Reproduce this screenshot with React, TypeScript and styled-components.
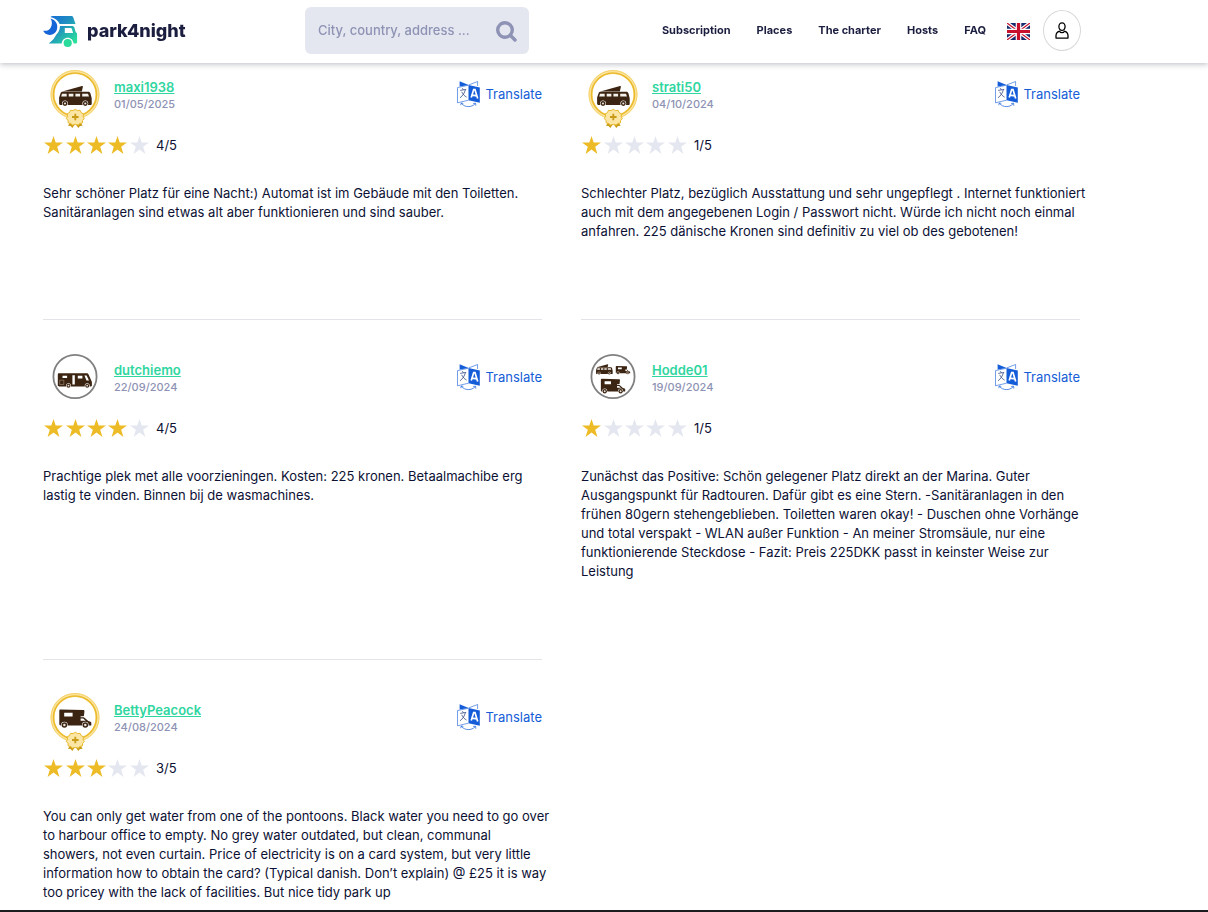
import React from "react";
import styled, { createGlobalStyle } from "styled-components";

const GlobalStyle = createGlobalStyle`
  *, *::before, *::after { box-sizing: border-box; }
  body {
    margin: 0;
    background: #fff;
    color: #0c1134;
    font-family: Inter, "Liberation Sans", sans-serif;
    font-size: 13px;
    line-height: 19px;
  }
  svg { display: block; flex: none; }
`;

const Header = styled.header`
  position: fixed;
  top: 0;
  left: 0;
  right: 0;
  z-index: 10;
  display: flex;
  align-items: center;
  height: 63px;
  padding: 0 127px 2px 43px;
  background: #fff;
  box-shadow: 0 1px 6px rgba(20, 22, 50, 0.3);
`;

const Logo = styled.a`
  display: flex;
  align-items: center;
  gap: 9px;
  width: 262px;
  color: #1b1e3f;
  font-size: 18px;
  font-weight: 800;
  line-height: 24px;
  text-decoration: none;
`;

const SearchForm = styled.form`
  display: flex;
  align-items: center;
  width: 224px;
  height: 47px;
  padding: 0 11px 0 13px;
  border-radius: 6px;
  background: #e4e7ef;
`;

const SearchInput = styled.input`
  flex: 1;
  min-width: 0;
  padding: 0;
  border: 0;
  outline: 0;
  background: transparent;
  color: #1b1e3f;
  font: 500 13px/19px Inter, "Liberation Sans", sans-serif;
  &::placeholder { color: #8e92b4; opacity: 1; }
`;

const IconButton = styled.button`
  padding: 0;
  border: 0;
  background: none;
  color: #8e92b4;
  cursor: pointer;
`;

const Nav = styled.nav`
  display: flex;
  align-items: center;
  gap: 26px;
  margin-left: auto;
`;

const NavLink = styled.a`
  color: #1b1e3f;
  font-size: 11px;
  font-weight: 700;
  white-space: nowrap;
  text-decoration: none;
`;

const LanguageButton = styled(IconButton)`
  margin: 2px 13px 0 21px;
`;

const AccountButton = styled.button`
  display: flex;
  align-items: center;
  justify-content: center;
  width: 38px;
  height: 41px;
  padding: 0;
  border: 1px solid #d8d8d8;
  border-radius: 50%;
  background: #fff;
  color: #000;
  cursor: pointer;
`;

const ReviewList = styled.main`
  display: grid;
  grid-template-columns: 1fr 1fr;
  column-gap: 39px;
  padding: 37px 128px 8px 43px;
`;

const Review = styled.article<{ $divided: boolean; $last: boolean }>`
  padding: 33px 0 ${(p) => (p.$last ? 0 : 78)}px;
  border-bottom: ${(p) => (p.$last ? 0 : 1)}px solid ${(p) => (p.$divided ? "#e4e4e8" : "transparent")};
`;

const ReviewHead = styled.div`
  display: flex;
  align-items: flex-start;
  height: 65px;
  padding-left: 7px;
`;

const Author = styled.div`
  display: flex;
  flex-direction: column;
  align-items: flex-start;
  margin-left: 14px;
  padding-top: 8px;
`;

const AuthorName = styled.a`
  color: #2fd6a0;
  font-weight: 600;
  line-height: 18px;
  text-decoration: underline;
`;

const ReviewDate = styled.time`
  color: #8e92b4;
  font-size: 11px;
  font-weight: 500;
  line-height: 16px;
`;

const TranslateButton = styled.button`
  display: flex;
  align-items: center;
  gap: 5px;
  margin: 10px 0 0 auto;
  padding: 0;
  border: 0;
  background: none;
  color: #155dd8;
  font: 400 13px/19px Inter, "Liberation Sans", sans-serif;
  cursor: pointer;
`;

const Rating = styled.div`
  display: flex;
  align-items: center;
  height: 20px;
`;

const Stars = styled.div`
  display: grid;
  grid-template-columns: repeat(5, 1fr);
  width: 107px;
  margin-right: 6px;
  justify-items: center;
`;

const Comment = styled.p`
  margin: 29px -8px 0 0;
`;

const Footer = styled.footer`
  height: 2px;
  background: #1c1c1e;
`;

const BROWN = "#3b2411";

function LogoMark() {
  return (
    <svg width="35" height="34" viewBox="0 0 35 34" aria-hidden="true">
      <defs>
        <linearGradient id="logo" x1="4" y1="3" x2="29" y2="31" gradientUnits="userSpaceOnUse">
          <stop offset="0" stopColor="#1668d8" />
          <stop offset="0.45" stopColor="#1f8fc0" />
          <stop offset="1" stopColor="#2ae29a" />
        </linearGradient>
      </defs>
      <path d="M7.600 4.600c5 1.500 7.500 5.600 6.500 10.200-1.200 5.200-6.200 7.400-10.200 5.500C2 19.500.8 18.200.2 16.700c2.800.6 5.900-.4 7.300-2.700C9.400 11 9.300 7.500 7.600 4.600z" fill="#1565d8" />
      <path d="M7.400 3C8.200 2.300 9 2 10 2h18.200c1 0 1.700.5 2 1.300L32.500 10H16.600C15.200 6.500 11.800 4 7.400 3z" fill="url(#logo)" />
      <path fillRule="evenodd" d="M17 11.900h12c1.200 0 2 .6 2.400 1.700l1.300 4.600c.9.300 1.400 1 1.400 2v8c0 .8-.5 1.200-1.300 1.200h-2.200c-.3-3.200-2.800-5.600-5.900-5.600-3.200 0-5.600 2.300-6 5.600H5.700c4-3 5.900-5.500 7.500-8.700 2.300-2.200 3.700-5 3.800-8.800zM21.800 14.100v4.900h8.300l-1.200-3.900c-.2-.7-.6-1-1.300-1z" fill="url(#logo)" />
      <circle cx="24.700" cy="29" r="4.100" fill="#29dc9b" />
    </svg>
  );
}

function SearchIcon() {
  return (
    <svg width="22" height="22" viewBox="0 0 22 22" fill="none" stroke="currentColor" strokeLinecap="round" aria-hidden="true">
      <circle cx="9" cy="10" r="7.300" strokeWidth="3.400" />
      <path d="M14.800 15.800l4.200 4.200" strokeWidth="3.400" />
    </svg>
  );
}

function FlagIcon() {
  return (
    <svg width="23" height="17" viewBox="0 0 23 17" aria-hidden="true">
      <path d="M0 0h23v17H0z" fill="#16296b" />
      <path d="M0 0l23 17M23 0L0 17" stroke="#fff" strokeWidth="3.600" />
      <path d="M0 0l11.500 8.500M23 17l-11.500-8.500" stroke="#c8102e" strokeWidth="1.200" />
      <path d="M23 0L11.500 8.500M0 17l11.500-8.500" stroke="#c8102e" strokeWidth="1.200" />
      <path d="M11.500 0v17M0 8.500h23" stroke="#fff" strokeWidth="5.600" />
      <path d="M11.500 0v17M0 8.500h23" stroke="#c8102e" strokeWidth="3.200" />
    </svg>
  );
}

function UserIcon() {
  return (
    <svg width="14" height="17" viewBox="0 0 14 17" fill="none" stroke="currentColor" strokeWidth="1.300" strokeLinejoin="round" aria-hidden="true">
      <ellipse cx="7" cy="4.600" rx="3.100" ry="3.800" />
      <path d="M4.500 9.200C2.200 10 1 11.400 1 13.700v2.400h12v-2.400c0-2.300-1.200-3.700-3.500-4.500-.5 1-1.400 1.500-2.500 1.500s-2-.5-2.500-1.500z" />
    </svg>
  );
}

function TranslateIcon() {
  return (
    <svg width="23" height="28" viewBox="0 0 23 28" fill="none" aria-hidden="true">
      <path d="M12 4.800l8.600-3.300V6" stroke="#155dd8" strokeWidth="0.600" />
      <path d="M2.600 1.200l9 3.800-9 1.400z" fill="#155dd8" />
      <path d="M11.500 5l11.300 2.400v15.400L11.500 20.200z" fill="#155dd8" />
      <path d="M11.500 5.200L.5 7.600v15.200l11-2.600" stroke="#155dd8" strokeWidth="0.600" />
      <path d="M14.200 17.500l2.500-8h1.300l2.700 9M15.200 15.200l4.600.6" stroke="#fff" strokeWidth="1.700" />
      <path d="M3.200 10.400l6-1M5.400 8.200l1 1.700M8.300 9.800c-.6 3-2.600 6-5.300 8M4.700 11.800c1.200 2.600 2.900 4.300 4.900 5.300" stroke="#3a4d86" strokeWidth="0.800" />
      <path d="M4.300 23.300c3.500 4.200 10.200 4.500 14 .3M3.800 25.200l.4-2.200 2.100.4M16.200 23.500l2.400-.3.200 2.500" stroke="#155dd8" strokeWidth="0.700" />
    </svg>
  );
}

function Wheel({ x, y, r }: { x: number; y: number; r: number }) {
  return (
    <>
      <circle cx={x} cy={y} r={r + 0.500} fill="#fff" />
      <circle cx={x} cy={y} r={r} fill={BROWN} />
      <circle cx={x} cy={y} r={r * 0.450} fill="#e8e2dc" />
    </>
  );
}

function CamperVan() {
  return (
    <g>
      <path d="M12.300 21.400L32 15.900l1 .3-1.200 5.200z" fill={BROWN} />
      <path d="M12.400 21.700h25.800c1.200 0 1.900.5 2.200 1.600l1.300 5v5.500c0 .8-.4 1.300-1.200 1.300H11c-1.200 0-1.900-.7-1.900-1.900v-5.600l1.500-4.400c.3-1 .9-1.500 1.800-1.500z" fill={BROWN} />
      <path d="M12 23.800h4.700v2.700h-5.500zM18.700 23.800h4.700v2.700h-4.700zM25.400 23.800h4.700v2.700h-4.700zM32.200 23.800h5.800l1 2.700h-6.800z" fill="#f4f0ec" />
      <Wheel x={15} y={33.500} r={2.400} />
      <Wheel x={35.300} y={33.500} r={2.400} />
    </g>
  );
}

function Integral() {
  return (
    <g>
      <path d="M9 20.300h27.500c1 0 1.700.4 2.100 1.300l3.300 7.400v3.600c0 .5-.3.800-.8.800H9c-.8 0-1.200-.4-1.200-1.200V21.500c0-.8.4-1.200 1.200-1.200z" fill={BROWN} />
      <path d="M12.500 22.700h4.600v2.400h-4.600zM22.400 22.300h2.400v9.200h-2.400zM27.800 22.800h4.600v2.700h-4.600zM34.400 22.500h2.200l2.400 5h-2.500z" fill="#fff" />
      <path d="M9.700 27.200h4.100v4.300H9.700z" stroke="#b5a698" strokeWidth="0.500" fill="none" />
      <Wheel x={18.500} y={32.700} r={2} />
      <Wheel x={37.200} y={32.700} r={2} />
    </g>
  );
}

function Overcab() {
  return (
    <g>
      <path d="M10.500 16.400l22.700.7c.9 0 1.300.4 1.200 1.300l-.4 4c0 .5-.3.800-.9.800h-2.500v1h3.300l4.400 3.700 2.200.8c.6.300.8.8.8 1.400v2.400H10.700c-.9 0-1.400-.5-1.400-1.400V17.700c0-.9.400-1.300 1.200-1.300z" fill={BROWN} />
      <path d="M14.200 19.700h8.400v3.700h-8.400zM30.600 25.400h2.600l2.400 2.400h-5z" fill="#fff" />
      <Wheel x={14.400} y={32} r={2.800} />
      <Wheel x={35.300} y={32} r={2.800} />
    </g>
  );
}

type Vehicle = "van" | "integral" | "overcab" | "all";

function Badge() {
  return (
    <g>
      <path d="M20.500 51.500L18 55.800l2.600.1 1.700 2 3-4.200 3 4.200 1.700-2 2.600-.1-2.500-4.300z" fill="#c89b17" />
      <path
        d="M25.300 39.300l2.200 1.300 2.600-.3 1 2.300 2.300 1.200-.3 2.600 1.200 2.100-1.700 1.900-.2 2.500-2.500.6-1.700 1.600-2.900-.7-2.900.7-1.700-1.600-2.500-.6-.2-2.500-1.700-1.900 1.200-2.100-.3-2.600 2.300-1.200 1-2.300 2.600.3z"
        fill="#fbe6a6"
        stroke="#e8b82a"
        strokeWidth="1"
      />
      <path d="M25.300 43.700v6.600M22 47h6.600" stroke="#c89b17" strokeWidth="1.800" />
    </g>
  );
}

function Avatar({ vehicle, member }: { vehicle: Vehicle; member: boolean }) {
  return (
    <svg width="50" height="58" viewBox="0 0 50 58" role="img" aria-label="Vehicle">
      {member ? (
        <>
          <circle cx="25" cy="24.500" r="22.500" fill="#fff" stroke="#fbe3a0" strokeWidth="4" />
          <circle cx="25" cy="24.500" r="24" fill="none" stroke="#f5d164" strokeWidth="0.900" />
          <circle cx="25" cy="24.500" r="21.500" fill="none" stroke="#ebbb2c" strokeWidth="1.600" />
        </>
      ) : (
        <circle cx="25" cy="23.500" r="21.600" fill="#fff" stroke="#808080" strokeWidth="1.800" />
      )}
      {vehicle === "van" && <CamperVan />}
      {vehicle === "integral" && <Integral />}
      {vehicle === "overcab" && <Overcab />}
      {vehicle === "all" && (
        <>
          <g transform="translate(3.400 3.200) scale(0.510)"><CamperVan /></g>
          <g transform="translate(23.600 5.600) scale(0.450)"><Overcab /></g>
          <g transform="translate(5.800 12.600) scale(0.760 0.800)"><Overcab /></g>
        </>
      )}
      {member && <Badge />}
    </svg>
  );
}

function Star({ filled }: { filled: boolean }) {
  return (
    <svg width="19" height="18" viewBox="0 0 19 18" aria-hidden="true">
      <path d="M9.500 0l2.200 6.600H19l-5.800 4.200 2.200 7.200-5.900-4.400L3.600 18l2.200-7.200L0 6.600h7.300z" fill={filled ? "#ecbb25" : "#e4e7ef"} />
    </svg>
  );
}

interface ReviewData {
  name: string;
  date: string;
  rating: number;
  vehicle: Vehicle;
  member: boolean;
  text: string;
}

const reviews: ReviewData[] = [
  {
    name: "maxi1938",
    date: "01/05/2025",
    rating: 4,
    vehicle: "van",
    member: true,
    text: "Sehr schöner Platz für eine Nacht:) Automat ist im Gebäude mit den Toiletten. Sanitäranlagen sind etwas alt aber funktionieren und sind sauber.",
  },
  {
    name: "strati50",
    date: "04/10/2024",
    rating: 1,
    vehicle: "van",
    member: true,
    text: "Schlechter Platz, bezüglich Ausstattung und sehr ungepflegt . Internet funktioniert auch mit dem angegebenen Login / Passwort nicht. Würde ich nicht noch einmal anfahren. 225 dänische Kronen sind definitiv zu viel ob des gebotenen!",
  },
  {
    name: "dutchiemo",
    date: "22/09/2024",
    rating: 4,
    vehicle: "integral",
    member: false,
    text: "Prachtige plek met alle voorzieningen. Kosten: 225 kronen. Betaalmachibe erg lastig te vinden. Binnen bij de wasmachines.",
  },
  {
    name: "Hodde01",
    date: "19/09/2024",
    rating: 1,
    vehicle: "all",
    member: false,
    text: "Zunächst das Positive: Schön gelegener Platz direkt an der Marina. Guter Ausgangspunkt für Radtouren. Dafür gibt es eine Stern. -Sanitäranlagen in den frühen 80gern stehengeblieben. Toiletten waren okay! - Duschen ohne Vorhänge und total verspakt - WLAN außer Funktion - An meiner Stromsäule, nur eine funktionierende Steckdose - Fazit: Preis 225DKK passt in keinster Weise zur Leistung",
  },
  {
    name: "BettyPeacock",
    date: "24/08/2024",
    rating: 3,
    vehicle: "overcab",
    member: true,
    text: "You can only get water from one of the pontoons. Black water you need to go over to harbour office to empty. No grey water outdated, but clean, communal showers, not even curtain. Price of electricity is on a card system, but very little information how to obtain the card? (Typical danish. Don’t explain) @ £25 it is way too pricey with the lack of facilities. But nice tidy park up",
  },
];

const navItems = ["Subscription", "Places", "The charter", "Hosts", "FAQ"];

export default function App() {
  return (
    <>
      <GlobalStyle />
      <Header>
        <Logo href="#">
          <LogoMark />
          park4night
        </Logo>
        <SearchForm role="search" onSubmit={(e) => e.preventDefault()}>
          <SearchInput type="text" placeholder="City, country, address ..." aria-label="City, country, address" />
          <IconButton type="submit" aria-label="Search">
            <SearchIcon />
          </IconButton>
        </SearchForm>
        <Nav>
          {navItems.map((item) => (
            <NavLink key={item} href="#">{item}</NavLink>
          ))}
        </Nav>
        <LanguageButton type="button" aria-label="Language">
          <FlagIcon />
        </LanguageButton>
        <AccountButton type="button" aria-label="Account">
          <UserIcon />
        </AccountButton>
      </Header>
      <ReviewList>
        {reviews.map((r, i) => (
          <Review key={r.name} $divided={i < 3} $last={i === reviews.length - 1}>
            <ReviewHead>
              <Avatar vehicle={r.vehicle} member={r.member} />
              <Author>
                <AuthorName href="#">{r.name}</AuthorName>
                <ReviewDate>{r.date}</ReviewDate>
              </Author>
              <TranslateButton type="button">
                <TranslateIcon />
                Translate
              </TranslateButton>
            </ReviewHead>
            <Rating>
              <Stars>
                {[1, 2, 3, 4, 5].map((n) => (
                  <Star key={n} filled={n <= r.rating} />
                ))}
              </Stars>
              {r.rating}/5
            </Rating>
            <Comment>{r.text}</Comment>
          </Review>
        ))}
      </ReviewList>
      <Footer />
    </>
  );
}
